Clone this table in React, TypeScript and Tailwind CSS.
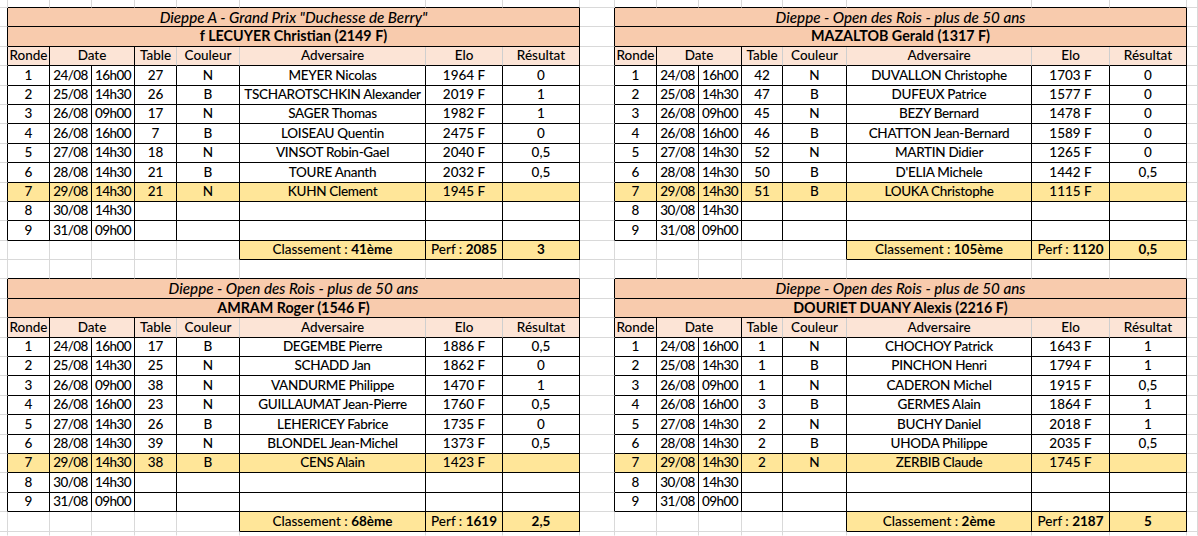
import React from "react";

type Game = [string, string, string, string, string, string, string];

interface Sheet {
  title: string;
  name: string;
  games: Game[];
  rank: string;
  perf: string;
  total: string;
}

interface Widths {
  c: string[];
  date: string;
  full: string;
}

const W1: Widths = {
  c: ["w-[42px]", "w-[42px]", "w-[43px]", "w-[42px]", "w-[63px]", "w-[186px]", "w-[77px]", "w-[77px]"],
  date: "w-[85px]",
  full: "w-[572px]",
};

const W2: Widths = {
  c: ["w-[42px]", "w-[42px]", "w-[43px]", "w-[41px]", "w-[64px]", "w-[185px]", "w-[78px]", "w-[77px]"],
  date: "w-[85px]",
  full: "w-[572px]",
};

const RB = "border-r-black";
const RG = "border-r-[#d9d9d9]";
const RH = "border-r-[#cfcfcf]";
const BB = "border-b-black";
const BG = "border-b-[#d9d9d9]";

const SALMON = "bg-[#f8cbad]";
const PEACH = "bg-[#fce4d6]";
const GOLD = "bg-[#ffe699]";

const tail: Game[] = [
  ["30/08", "14h30", "", "", "", "", ""],
  ["31/08", "09h00", "", "", "", "", ""],
];

const lecuyer: Sheet = {
  title: 'Dieppe A - Grand Prix "Duchesse de Berry"',
  name: "f LECUYER Christian (2149 F)",
  games: [
    ["24/08", "16h00", "27", "N", "MEYER Nicolas", "1964 F", "0"],
    ["25/08", "14h30", "26", "B", "TSCHAROTSCHKIN Alexander", "2019 F", "1"],
    ["26/08", "09h00", "17", "N", "SAGER Thomas", "1982 F", "1"],
    ["26/08", "16h00", "7", "B", "LOISEAU Quentin", "2475 F", "0"],
    ["27/08", "14h30", "18", "N", "VINSOT Robin-Gael", "2040 F", "0,5"],
    ["28/08", "14h30", "21", "B", "TOURE Ananth", "2032 F", "0,5"],
    ["29/08", "14h30", "21", "N", "KUHN Clement", "1945 F", ""],
    ...tail,
  ],
  rank: "41ème",
  perf: "2085",
  total: "3",
};

const mazaltob: Sheet = {
  title: "Dieppe - Open des Rois - plus de 50 ans",
  name: "MAZALTOB Gerald (1317 F)",
  games: [
    ["24/08", "16h00", "42", "N", "DUVALLON Christophe", "1703 F", "0"],
    ["25/08", "14h30", "47", "B", "DUFEUX Patrice", "1577 F", "0"],
    ["26/08", "09h00", "45", "N", "BEZY Bernard", "1478 F", "0"],
    ["26/08", "16h00", "46", "B", "CHATTON Jean-Bernard", "1589 F", "0"],
    ["27/08", "14h30", "52", "N", "MARTIN Didier", "1265 F", "0"],
    ["28/08", "14h30", "50", "B", "D'ELIA Michele", "1442 F", "0,5"],
    ["29/08", "14h30", "51", "B", "LOUKA Christophe", "1115 F", ""],
    ...tail,
  ],
  rank: "105ème",
  perf: "1120",
  total: "0,5",
};

const amram: Sheet = {
  title: "Dieppe - Open des Rois - plus de 50 ans",
  name: "AMRAM Roger (1546 F)",
  games: [
    ["24/08", "16h00", "17", "B", "DEGEMBE Pierre", "1886 F", "0,5"],
    ["25/08", "14h30", "25", "N", "SCHADD Jan", "1862 F", "0"],
    ["26/08", "09h00", "38", "N", "VANDURME Philippe", "1470 F", "1"],
    ["26/08", "16h00", "23", "N", "GUILLAUMAT Jean-Pierre", "1760 F", "0,5"],
    ["27/08", "14h30", "26", "B", "LEHERICEY Fabrice", "1735 F", "0"],
    ["28/08", "14h30", "39", "N", "BLONDEL Jean-Michel", "1373 F", "0,5"],
    ["29/08", "14h30", "38", "B", "CENS Alain", "1423 F", ""],
    ...tail,
  ],
  rank: "68ème",
  perf: "1619",
  total: "2,5",
};

const douriet: Sheet = {
  title: "Dieppe - Open des Rois - plus de 50 ans",
  name: "DOURIET DUANY Alexis (2216 F)",
  games: [
    ["24/08", "16h00", "1", "N", "CHOCHOY Patrick", "1643 F", "1"],
    ["25/08", "14h30", "1", "B", "PINCHON Henri", "1794 F", "1"],
    ["26/08", "09h00", "1", "N", "CADERON Michel", "1915 F", "0,5"],
    ["26/08", "16h00", "3", "B", "GERMES Alain", "1864 F", "1"],
    ["27/08", "14h30", "2", "N", "BUCHY Daniel", "2018 F", "1"],
    ["28/08", "14h30", "2", "B", "UHODA Philippe", "2035 F", "0,5"],
    ["29/08", "14h30", "2", "N", "ZERBIB Claude", "1745 F", ""],
    ...tail,
  ],
  rank: "2ème",
  perf: "2187",
  total: "5",
};

function Cell({
  w,
  children,
  bg = "",
  r = RB,
  b = BB,
  cls = "",
}: {
  w: string;
  children?: React.ReactNode;
  bg?: string;
  r?: string;
  b?: string;
  cls?: string;
}) {
  return (
    <div
      className={`${w} ${bg} ${r} ${b} ${cls} h-full shrink-0 border-r border-b flex items-center justify-center whitespace-nowrap overflow-hidden`}
    >
      {children}
    </div>
  );
}

type Kind = "strip" | "title" | "name" | "header" | "game" | "rank" | "empty" | "foot";

// does the table own the left edge of this row?
const isTable = (k: Kind) => k === "title" || k === "name" || k === "header" || k === "game";

// per-column tweaks for game rows: date/time a bit tighter, names a hair tighter
const gameCls = ["tracking-[-0.6px]", "tracking-[-0.6px]", "", "", "tracking-[-0.3px]", "", ""];

function TableCells({ s, w, kind, i = 0 }: { s: Sheet; w: Widths; kind: Kind; i?: number }) {
  const c = w.c;
  if (kind === "title")
    return (
      <Cell w={w.full} bg={SALMON} cls="italic text-[15.2px]">
        {s.title}
      </Cell>
    );
  if (kind === "name")
    return (
      <Cell w={w.full} bg={SALMON} cls="font-bold text-[14.3px]">
        {s.name}
      </Cell>
    );
  if (kind === "header")
    return (
      <>
        <Cell w={c[0]} bg={PEACH}>Ronde</Cell>
        <Cell w={w.date} bg={PEACH}>Date</Cell>
        <Cell w={c[3]} bg={PEACH} r={RH}>Table</Cell>
        <Cell w={c[4]} bg={PEACH} r={RH}>Couleur</Cell>
        <Cell w={c[5]} bg={PEACH} r={RH}>Adversaire</Cell>
        <Cell w={c[6]} bg={PEACH} r={RH}>Elo</Cell>
        <Cell w={c[7]} bg={PEACH}>Résultat</Cell>
      </>
    );
  if (kind === "game") {
    const g = s.games[i];
    const bg = i === 6 ? GOLD : "";
    return (
      <>
        <Cell w={c[0]} bg={bg}>{i + 1}</Cell>
        {g.map((v, j) => (
          <Cell key={j} w={c[j + 1]} bg={bg} cls={gameCls[j]}>
            {v}
          </Cell>
        ))}
      </>
    );
  }
  if (kind === "rank")
    return (
      <>
        <Cell w={c[0]} r={RG} b={BG} />
        <Cell w={c[1]} r={RG} b={BG} />
        <Cell w={c[2]} r={RG} b={BG} />
        <Cell w={c[3]} r={RG} b={BG} />
        <Cell w={c[4]} b={BG} />
        <Cell w={c[5]} bg={GOLD}>
          Classement :&nbsp;<span className="font-bold">{s.rank}</span>
        </Cell>
        <Cell w={c[6]} bg={GOLD}>
          Perf :&nbsp;<span className="font-bold">{s.perf}</span>
        </Cell>
        <Cell w={c[7]} bg={GOLD} cls="font-bold">
          {s.total}
        </Cell>
      </>
    );
  // strip / empty sit just above a table, foot is the cut-off last row
  const b = kind === "foot" ? "border-b-transparent" : BB;
  return (
    <>
      {c.map((cw, j) => (
        <Cell key={j} w={cw} r={RG} b={b} />
      ))}
    </>
  );
}

function SheetRow({
  left,
  right,
  kind,
  i,
  h = "h-[19.4px]",
}: {
  left: Sheet;
  right: Sheet;
  kind: Kind;
  i?: number;
  h?: string;
}) {
  const edge = isTable(kind) ? RB : RG;
  const gb = kind === "foot" ? "border-b-transparent" : BG;
  return (
    <div className={`flex ${h}`}>
      <Cell w="w-[8px]" r={edge} b={gb} />
      <TableCells s={left} w={W1} kind={kind} i={i} />
      <Cell w="w-[35px]" r={edge} b={gb} />
      <TableCells s={right} w={W2} kind={kind} i={i} />
      <Cell w="flex-1" r={RG} b={gb} />
    </div>
  );
}

function Band({ left, right, last }: { left: Sheet; right: Sheet; last?: boolean }) {
  return (
    <>
      <SheetRow left={left} right={right} kind="title" />
      <SheetRow left={left} right={right} kind="name" />
      <SheetRow left={left} right={right} kind="header" />
      {left.games.map((_, i) => (
        <SheetRow key={i} left={left} right={right} kind="game" i={i} />
      ))}
      <SheetRow left={left} right={right} kind="rank" />
      {!last && <SheetRow left={left} right={right} kind="empty" />}
    </>
  );
}

export default function App() {
  return (
    <div className="w-[1198px] h-[536px] overflow-hidden bg-white text-black font-[Lato,sans-serif] font-medium text-[13.5px] leading-none flex flex-col">
      <SheetRow left={lecuyer} right={mazaltob} kind="strip" h="h-[8px]" />
      <Band left={lecuyer} right={mazaltob} />
      <Band left={amram} right={douriet} last />
      <div className="flex-1 flex flex-col">
        <SheetRow left={amram} right={douriet} kind="foot" h="h-full" />
      </div>
    </div>
  );
}
